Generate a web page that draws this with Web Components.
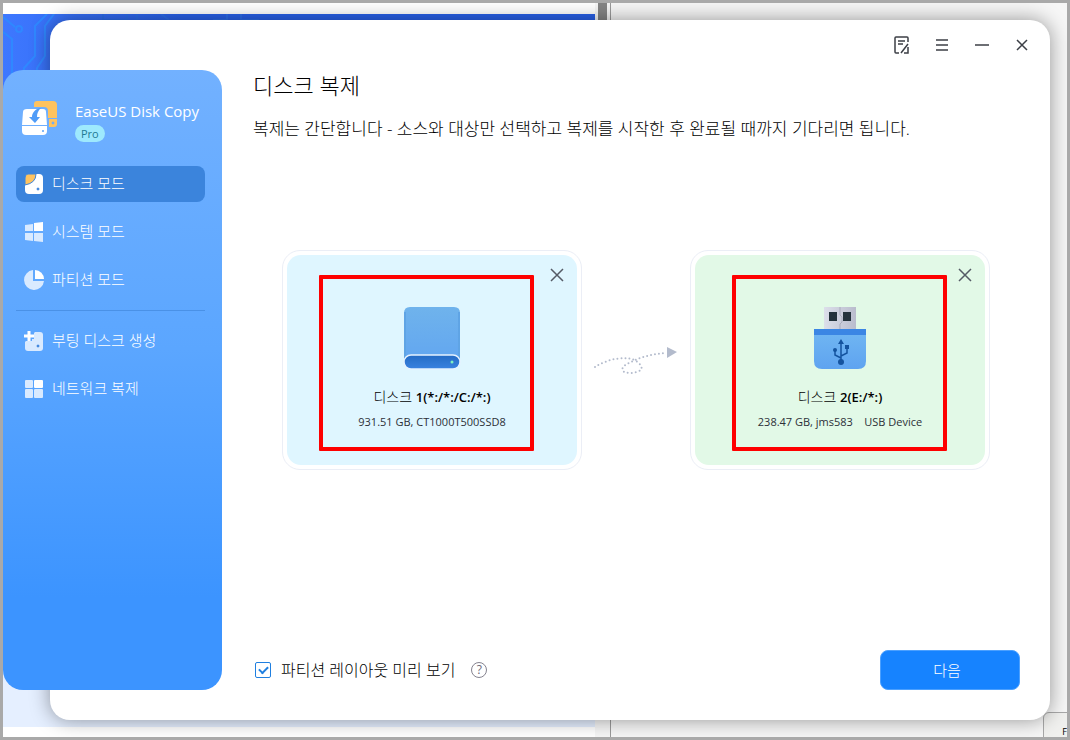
<!DOCTYPE html>
<html lang="ko">
<head>
<meta charset="utf-8">
<title>EaseUS Disk Copy</title>
<style>
  html, body {
    height: 100%;
    margin: 0;
  }

  body {
    font-family: "Open Sans", "Noto Sans CJK KR", sans-serif;
    color: #000;
  }
</style>
</head>
<body>
<desktop-view>
  <app-window>
    <side-bar slot="sidebar">
      <nav-item icon="disk" active>디스크 모드</nav-item>
      <nav-item icon="system">시스템 모드</nav-item>
      <nav-item icon="partition">파티션 모드</nav-item>
      <nav-item icon="boot" slot="tools">부팅 디스크 생성</nav-item>
      <nav-item icon="network" slot="tools">네트워크 복제</nav-item>
    </side-bar>
    <title-bar></title-bar>
    <page-heading>
      <span slot="title">디스크 복제</span>
      복제는 간단합니다 - 소스와 대상만 선택하고 복제를 시작한 후 완료될 때까지 기다리면 됩니다.
    </page-heading>
    <copy-flow>
      <disk-card kind="hdd">
        <span slot="prefix">디스크</span>
        <span slot="name">1(*:/*:/C:/*:)</span>
        931.51 GB, CT1000T500SSD8
      </disk-card>
      <flow-arrow></flow-arrow>
      <disk-card kind="usb">
        <span slot="prefix">디스크</span>
        <span slot="name">2(E:/*:)</span>
        238.47 GB, jms583&nbsp;&nbsp;&nbsp; USB Device
      </disk-card>
    </copy-flow>
    <page-footer></page-footer>
  </app-window>
</desktop-view>

<script>
// Desktop behind the window: a browser page on the left, another window on the right
class DesktopView extends HTMLElement {
  constructor () {
    super()
    this.attachShadow({ mode: 'open' })
  }

  connectedCallback () {
    this.shadowRoot.innerHTML = `
      <style>
        :host {
          display: flex;
          position: relative;
          height: 100%;
          min-height: 600px;
          box-sizing: border-box;
          border: 3px solid #a9a9a9;
          overflow: hidden;
          background: #f6f6f6;
        }

        .page {
          flex: 0 0 592px;
          display: flex;
          flex-direction: column;
          background: #fff;
        }

        .hero {
          flex: 1;
          margin-top: 11px;
          background: linear-gradient(90deg, #3e78ff, #2860e8 180px);
        }

        .hero svg {
          display: block;
        }

        .pale {
          height: 80px;
          margin-bottom: 10px;
          background: #e5efff;
        }

        .scroll {
          flex: 0 0 9px;
          height: 60%;
          margin: 0 3px;
          background: #858585;
        }

        .edge {
          flex: 0 0 1px;
          background: #9a9a9a;
        }

        .corner {
          position: absolute;
          right: -1px;
          bottom: -1px;
          display: flex;
          justify-content: flex-end;
          align-items: flex-end;
          width: 25px;
          height: 26px;
          box-sizing: border-box;
          border: 1px solid #a8a8a8;
          border-radius: 6px 0 0 0;
          background: #f0f0ee;
          font-size: 9px;
          line-height: 10px;
        }
      </style>
      <div class="page">
        <div class="hero">
          <svg width="300" height="90" fill="none" stroke="#2f88ff" stroke-width="2">
            <path d="M0 3l12 10"/><circle cx="16" cy="15" r="3"/>
            <path d="M0 18l9 7v50M44 0L32 12v30L21 54v20M51 0l-9 12v30L34 54v20"/>
            <path d="M100 0v6h24v-6M134 0v6M158 0l8 6M210 6h14v-6M238 0v6h18" stroke="#2b6cea"/>
          </svg>
        </div>
        <div class="pale"></div>
      </div>
      <div class="scroll"></div>
      <div class="edge"></div>
      <div class="corner">F</div>
      <slot></slot>
    `
  }
}

// White rounded panel, with the sidebar hanging out of its left edge
class AppWindow extends HTMLElement {
  constructor () {
    super()
    this.attachShadow({ mode: 'open' })
  }

  connectedCallback () {
    this.shadowRoot.innerHTML = `
      <style>
        :host {
          position: absolute;
          top: 17px;
          right: 17px;
          bottom: 17px;
          left: 0;
          display: grid;
          grid-template-columns: 219px 1fr;
        }

        .panel {
          position: absolute;
          top: 0;
          right: 0;
          bottom: 0;
          left: 47px;
          border-radius: 20px;
          background: #fff;
          box-shadow: 0 0 20px rgba(0, 0, 0, 0.4);
        }

        .side {
          position: relative;
          display: grid;
          padding: 50px 0 30px;
        }

        main {
          position: relative;
          display: flex;
          flex-direction: column;
          padding: 0 30px;
          min-width: 0;
        }
      </style>
      <div class="panel"></div>
      <div class="side"><slot name="sidebar"></slot></div>
      <main><slot></slot></main>
    `
  }
}

class SideBar extends HTMLElement {
  constructor () {
    super()
    this.attachShadow({ mode: 'open' })
  }

  connectedCallback () {
    this.shadowRoot.innerHTML = `
      <style>
        :host {
          display: block;
          padding: 30px 17px 0 13px;
          border-radius: 20px;
          background: linear-gradient(#72b1ff, #5ba6ff 45%, #3c94ff 85%, #3c94ff);
          color: #fff;
        }

        .brand {
          display: flex;
          gap: 17px;
          height: 66px;
          padding-left: 6px;
        }

        .name {
          padding-top: 1px;
          font-size: 15px;
          line-height: 20px;
          font-weight: 500;
          white-space: nowrap;
        }

        .badge {
          display: inline-block;
          margin-top: 3px;
          padding: 0 6px;
          border-radius: 9px;
          background: #9ee9fd;
          color: #1f7a94;
          font-size: 11px;
          line-height: 17px;
        }

        nav {
          display: flex;
          flex-direction: column;
          gap: 12px;
        }

        hr {
          width: 100%;
          height: 1px;
          margin: 0;
          border: 0;
          background: #4a91e6;
        }
      </style>
      <div class="brand">
        <svg width="36" height="36" viewBox="0 0 36 36">
          <path d="M15 1h16q4 0 4 4v13h-9V11q0-4-4-4H12V4q0-3 3-3z" fill="#ffc35f"/>
          <path d="M27 19h8v5q0 3-3 3h-5z" fill="#ffc35f"/>
          <circle cx="31" cy="23" r="1" fill="#6aadff" stroke="#6aadff"/>
          <path d="M5 9h16q3 0 3 3l1 13H0l1-13q0-3 4-3z" fill="#fff"/>
          <path d="M18 8c-5 1-8 5-8 9H7l6 6 5-6h-3c0-4 1-6 4-9z" fill="#4f9cf8"/>
          <path d="M0 26h25v5q0 4-4 4H4q-4 0-4-4z" fill="#fff"/>
          <circle cx="21" cy="31" r="1" fill="#5ba2f5"/>
        </svg>
        <div>
          <div class="name">EaseUS Disk Copy</div>
          <span class="badge">Pro</span>
        </div>
      </div>
      <nav>
        <slot></slot>
        <hr>
        <slot name="tools"></slot>
      </nav>
    `
  }
}

const navIcons = {
  disk: `
    <path d="M4 0h11q4 0 4 4v12q0 4-4 4H5q-4 0-4-4V4q0-4 3-4z" fill="#fff"/>
    <path d="M4 0h8Q12 9 1 11V4q0-4 3-4z" fill="#ffc35f" stroke="#3b84dc"/>
    <circle cx="14" cy="15" r="1" fill="#3b84dc" stroke="#3b84dc"/>`,
  system: `
    <path d="M1 3l8-1v7H1zM1 11h8v8l-8-1z" fill="#d9eaff"/>
    <path d="M10 1l9-1v9h-9z" fill="#fff"/>
    <path d="M10 11h9v9l-9-1z" fill="#d9eaff"/>`,
  partition: `
    <path d="M9 0v11h11A10 10 0 1 1 9 0z" fill="#d9eaff"/>
    <path d="M11 0a9 9 0 0 1 9 9h-9z" fill="#fff"/>`,
  boot: `
    <path d="M11 1h5q3 0 3 3v13q0 3-3 3H4q-3 0-3-3V11z" fill="#d9eaff"/>
    <path d="M5 0v10M0 5h10" stroke="#5ba5ff" stroke-width="6"/>
    <path d="M5 0v10M0 5h10" stroke="#fff" stroke-width="3"/>
    <circle cx="14" cy="15" r="1" fill="#3b84dc" stroke="#3b84dc"/>`,
  network: `
    <rect x="1" y="1" width="8" height="8" rx="1" fill="#d9eaff"/>
    <rect x="10" y="1" width="9" height="8" rx="1" fill="#fff"/>
    <rect x="1" y="10" width="8" height="9" rx="1" fill="#d9eaff"/>
    <rect x="10" y="10" width="9" height="9" rx="1" fill="#d9eaff"/>`
}

class NavItem extends HTMLElement {
  constructor () {
    super()
    this.attachShadow({ mode: 'open' })
  }

  connectedCallback () {
    this.shadowRoot.innerHTML = `
      <style>
        :host {
          display: block;
        }

        button {
          display: flex;
          align-items: center;
          gap: 8px;
          width: 100%;
          height: 36px;
          padding: 0 8px;
          border: 0;
          border-radius: 8px;
          background: none;
          color: #fff;
          font-family: inherit;
          font-size: 15px;
          font-weight: 300;
          line-height: 20px;
          white-space: nowrap;
          cursor: pointer;
        }

        span {
          padding-bottom: 2px;
        }

        :host([active]) button {
          background: #3b84dc;
        }
      </style>
      <button type="button">
        <svg width="20" height="20" viewBox="0 0 20 20">${navIcons[this.getAttribute('icon')]}</svg>
        <span><slot></slot></span>
      </button>
    `
  }
}

class TitleBar extends HTMLElement {
  constructor () {
    super()
    this.attachShadow({ mode: 'open' })
  }

  connectedCallback () {
    this.shadowRoot.innerHTML = `
      <style>
        :host {
          display: flex;
          justify-content: flex-end;
          gap: 20px;
          margin-right: -12px;
          padding-top: 15px;
        }

        button {
          width: 20px;
          height: 20px;
          padding: 0;
          border: 0;
          background: none;
          cursor: pointer;
        }

        svg {
          display: block;
          fill: none;
          stroke: #3c3f46;
          stroke-width: 1.5;
        }
      </style>
      <button type="button" aria-label="로그">
        <svg width="20" height="20"><path d="M7 18H4q-1 0-1-1V3q0-1 1-1h11q1 0 1 1v4M6 6h7M6 9h5M16 9L9 18M16 12v6h-4"/></svg>
      </button>
      <button type="button" aria-label="메뉴">
        <svg width="20" height="20"><path d="M4 5h12M4 10h12M4 15h12"/></svg>
      </button>
      <button type="button" aria-label="최소화">
        <svg width="20" height="20"><path d="M3 10h14"/></svg>
      </button>
      <button type="button" aria-label="닫기">
        <svg width="20" height="20"><path d="M5 5l10 10M15 5L5 15"/></svg>
      </button>
    `
  }
}

class PageHeading extends HTMLElement {
  constructor () {
    super()
    this.attachShadow({ mode: 'open' })
  }

  connectedCallback () {
    this.shadowRoot.innerHTML = `
      <style>
        :host {
          display: block;
          padding: 14px 0 0 1px;
          font-weight: 300;
        }

        h1 {
          margin: 0;
          font-size: 22px;
          font-weight: 300;
          line-height: 32px;
        }

        p {
          margin: 16px 0 0;
          font-size: 17px;
          line-height: 24px;
        }
      </style>
      <h1><slot name="title"></slot></h1>
      <p><slot></slot></p>
    `
  }
}

class CopyFlow extends HTMLElement {
  constructor () {
    super()
    this.attachShadow({ mode: 'open' })
  }

  connectedCallback () {
    this.shadowRoot.innerHTML = `
      <style>
        :host {
          flex: 1;
          display: flex;
          justify-content: center;
          align-items: flex-start;
          gap: 12px;
          padding-top: 109px;
        }
      </style>
      <slot></slot>
    `
  }
}

const diskIcons = {
  hdd: `
    <svg width="60" height="64" viewBox="0 0 60 64">
      <defs>
        <linearGradient id="body" x2="0" y2="1"><stop stop-color="#6fb3ec"/><stop offset="1" stop-color="#62a6f0"/></linearGradient>
        <linearGradient id="base" x2="0" y2="1"><stop stop-color="#246bc4"/><stop offset="1" stop-color="#3b82e0"/></linearGradient>
      </defs>
      <path d="M8 1h44q6 0 6 6v48H2V7q0-6 6-6z" fill="url(#body)"/>
      <path d="M3 6v46M57 6v46" stroke="#5fa4e5" stroke-width="2"/>
      <rect x="2" y="49" width="56" height="14" rx="7" fill="url(#base)" stroke="#e6f2ff" stroke-width="1.5"/>
      <circle cx="50" cy="56" r="1.5" fill="#7ff0c0"/>
    </svg>`,
  usb: `
    <svg width="60" height="64" viewBox="0 0 60 64">
      <defs>
        <linearGradient id="plug"><stop stop-color="#dcdfea"/><stop offset="1" stop-color="#b9bccd"/></linearGradient>
        <linearGradient id="body" x2="0" y2="1"><stop stop-color="#6fb5f2"/><stop offset="1" stop-color="#5ea3f0"/></linearGradient>
      </defs>
      <rect x="14" y="1" width="32" height="24" fill="url(#plug)"/>
      <path d="M30 1v8l2 2v5l-2 2v6" stroke="#a9acbd" fill="none"/>
      <path d="M19 6h8v9h-8zM33 6h8v9h-8z" fill="#24323c"/>
      <path d="M4 28h52v27q0 8-8 8H12q-8 0-8-8z" fill="url(#body)"/>
      <path d="M4 23h52v6H4z" fill="#3b86e4"/>
      <path d="M31 37v20M31 52l-6-3v-5M31 50l6-3v-5" fill="none" stroke="#14539f" stroke-width="1.5"/>
      <g fill="#14539f">
        <path d="M31 33l3 5h-6z"/>
        <circle cx="31" cy="56" r="3"/>
        <circle cx="25" cy="44" r="2"/>
        <path d="M35 39h4v4h-4z"/>
      </g>
    </svg>`
}

class DiskCard extends HTMLElement {
  constructor () {
    super()
    this.attachShadow({ mode: 'open' })
  }

  connectedCallback () {
    this.shadowRoot.innerHTML = `
      <style>
        :host {
          flex: 0 1 300px;
          position: relative;
          box-sizing: border-box;
          padding: 4px;
          border: 1px solid #ebeef6;
          border-radius: 18px;
          --fill: #dff6ff;
          --mark-left: 36px;
        }

        :host([kind="usb"]) {
          --fill: #e2f9e7;
          --mark-left: 41px;
        }

        .body {
          display: flex;
          flex-direction: column;
          align-items: center;
          height: 210px;
          box-sizing: border-box;
          padding: 10px;
          border-radius: 14px;
          background: var(--fill);
        }

        button {
          align-self: flex-end;
          width: 20px;
          height: 20px;
          padding: 0;
          border: 0;
          background: none;
          cursor: pointer;
        }

        button svg {
          display: block;
        }

        .icon {
          height: 64px;
          margin-top: 21px;
        }

        .title {
          margin-top: 15px;
          font-size: 14px;
          line-height: 24px;
          white-space: nowrap;
        }

        .prefix {
          font-weight: 300;
        }

        .name {
          font-size: 13px;
          font-weight: 600;
        }

        .info {
          margin-top: 4px;
          font-size: 11px;
          line-height: 18px;
          color: #2c3038;
          white-space: nowrap;
        }

        .mark {
          position: absolute;
          top: 24px;
          left: var(--mark-left);
          width: 215px;
          height: 176px;
          box-sizing: border-box;
          border: 4px solid #fe0000;
          border-radius: 1px;
          pointer-events: none;
        }
      </style>
      <div class="body">
        <button type="button" aria-label="제거">
          <svg width="20" height="20" stroke="#555b66" stroke-width="1.5"><path d="M4 4l12 12M16 4L4 16"/></svg>
        </button>
        <div class="icon">${diskIcons[this.getAttribute('kind')]}</div>
        <div class="title">
          <span class="prefix"><slot name="prefix"></slot></span>
          <span class="name"><slot name="name"></slot></span>
        </div>
        <div class="info"><slot></slot></div>
      </div>
      <div class="mark"></div>
    `
  }
}

class FlowArrow extends HTMLElement {
  constructor () {
    super()
    this.attachShadow({ mode: 'open' })
  }

  connectedCallback () {
    this.shadowRoot.innerHTML = `
      <style>
        :host {
          display: block;
          flex: 0 0 84px;
          padding-top: 94px;
        }

        svg {
          display: block;
        }
      </style>
      <svg width="84" height="32" viewBox="0 0 84 32">
        <path d="M1 23C13 15 33 11 42 17c12 8 2 12-6 12-10 0-10-6-1-10 11-6 24-9 37-10" fill="none" stroke="#b3bbcc" stroke-width="2" stroke-linecap="round" stroke-dasharray="0 4"/>
        <path d="M73 3l10 5-10 6z" fill="#b3bbcc"/>
      </svg>
    `
  }
}

class PageFooter extends HTMLElement {
  constructor () {
    super()
    this.attachShadow({ mode: 'open' })
  }

  connectedCallback () {
    this.shadowRoot.innerHTML = `
      <style>
        :host {
          display: flex;
          align-items: center;
          padding: 0 0 30px 3px;
        }

        label {
          display: flex;
          align-items: center;
          gap: 10px;
          font-size: 16px;
          font-weight: 300;
          line-height: 24px;
        }

        input {
          appearance: none;
          display: grid;
          place-items: center;
          width: 16px;
          height: 16px;
          margin: 0;
          border: 1px solid #1f7fe0;
          border-radius: 2px;
          background: #fff;
        }

        input:checked::before {
          content: "";
          width: 9px;
          height: 6px;
          border: solid #1f7fe0;
          border-width: 0 0 2px 2px;
          margin-bottom: 3px;
          box-sizing: border-box;
          transform: rotate(-45deg);
        }

        .help {
          width: 16px;
          height: 16px;
          box-sizing: border-box;
          margin-left: 16px;
          padding: 0;
          border: 1px solid #85838f;
          border-radius: 50%;
          background: none;
          color: #6c6a78;
          font-family: inherit;
          font-size: 12px;
          line-height: 14px;
        }

        .next {
          width: 140px;
          height: 40px;
          margin-left: auto;
          padding: 0 6px 2px 0;
          border: 1px solid #4ba0ff;
          border-radius: 8px;
          background: #1683ff;
          color: #fff;
          font-family: inherit;
          font-size: 15px;
          font-weight: 300;
          cursor: pointer;
        }
      </style>
      <label><input type="checkbox" checked>파티션 레이아웃 미리 보기</label>
      <button class="help" type="button">?</button>
      <button class="next" type="button">다음</button>
    `
  }
}

customElements.define('desktop-view', DesktopView)
customElements.define('app-window', AppWindow)
customElements.define('side-bar', SideBar)
customElements.define('nav-item', NavItem)
customElements.define('title-bar', TitleBar)
customElements.define('page-heading', PageHeading)
customElements.define('copy-flow', CopyFlow)
customElements.define('disk-card', DiskCard)
customElements.define('flow-arrow', FlowArrow)
customElements.define('page-footer', PageFooter)
</script>
</body>
</html>
